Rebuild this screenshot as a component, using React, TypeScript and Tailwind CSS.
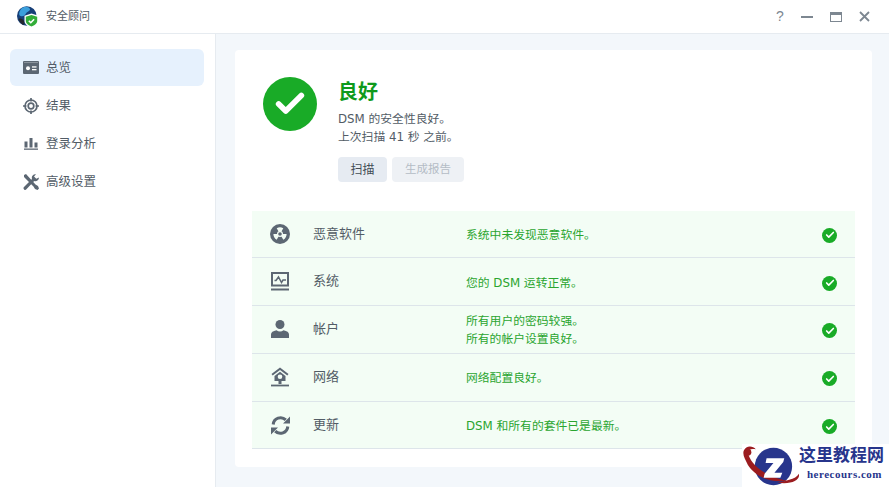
import React from 'react';
import { Check } from 'lucide-react';

const FONT = 'font-["DejaVu_Sans","Noto_Sans_CJK_SC",sans-serif]';

const AppLogo = () => (
  <svg width="22" height="22" viewBox="0 0 22 22">
    <circle cx="9.800" cy="10" r="9.800" fill="#173f78" />
    <path d="M4.500 2.500c3-2.500 7-2 8.500 .5 .5 2-3 2.500-4 4.500s-3 3.500-5.500 2.500-1-5.500 1-7.500z" fill="#3b9fdc" />
    <path d="M1.500 13c2-1 4.500 0 5.500 2s0 4.500-1.500 3.500-3.500-3.500-4-5.500z" fill="#23272f" />
    <path d="M14.500 7.500l7 2.300v5.200c0 3.300-3.500 5.800-7 7-3.500-1.200-7-3.700-7-7V9.800z" fill="#fff" />
    <path d="M14.500 9l5.700 1.800v4.200c0 2.600-2.800 4.500-5.700 5.500-2.900-1-5.700-2.900-5.700-5.500v-4.200z" fill="#32ad38" />
    <path d="M11.800 14.700l2 2 3.300-3.500" fill="none" stroke="#fff" strokeWidth="1.600" />
  </svg>
);

const OverviewIcon = () => (
  <svg width="16" height="13" viewBox="0 0 16 13">
    <rect width="16" height="13" rx="1" fill="#5c6773" />
    <rect x="1" y="1" width="14" height="1" fill="#8b949d" />
    <circle cx="5" cy="7.200" r="2" fill="#fff" />
    <rect x="9" y="5.300" width="4.500" height="1.300" fill="#fff" />
    <rect x="9" y="8" width="4.500" height="1.300" fill="#fff" />
  </svg>
);

const ResultIcon = () => (
  <svg width="16" height="16" viewBox="0 0 16 16" fill="none" stroke="#5c6773">
    <circle cx="8" cy="8" r="6" strokeWidth="1.700" />
    <circle cx="8" cy="8" r="2.800" strokeWidth="1.700" />
    <path d="M8 0v3.500M8 12.500V16M0 8h3.500M12.500 8H16" strokeWidth="1.700" />
  </svg>
);

const ChartIcon = () => (
  <svg width="14" height="13" viewBox="0 0 14 13" fill="#5c6773">
    <rect x="0.500" y="4.500" width="3" height="6" />
    <rect x="5.500" y="1" width="3" height="9.500" />
    <rect x="10.500" y="5.500" width="3" height="5" />
    <rect x="0" y="11.500" width="14" height="1.300" />
  </svg>
);

const ToolsIcon = () => (
  <svg width="16" height="16" viewBox="0 0 16 16" fill="#5c6773">
    <path d="M1 1l2-1 9.500 10.500 2.500 1.500 1 2.500-1.500 1.500-2.500-1-1.500-2.500L1 3z" />
    <path d="M16 3.500a3.600 3.600 0 0 1-4.800 3.400L3.400 15.300a1.300 1.300 0 0 1-2.400-2.200l8-8.200A3.600 3.600 0 0 1 13 .2l-2 2.300 2.300 2.200z" />
  </svg>
);

const MalwareIcon = () => (
  <svg width="20" height="20" viewBox="0 0 20 20">
    <circle cx="10" cy="10" r="10" fill="#5c6773" />
    <path d="M10 10L6.700 4.300a6.600 6.600 0 0 1 6.600 0zM10 10h6.600a6.600 6.600 0 0 1-3.300 5.700zM10 10l-3.300 5.700A6.600 6.600 0 0 1 3.400 10z" fill="#f3fdf5" />
    <circle cx="10" cy="10" r="3" fill="#f3fdf5" />
    <circle cx="10" cy="10" r="1.800" fill="#5c6773" />
  </svg>
);

const SystemIcon = () => (
  <svg width="18" height="19" viewBox="0 0 18 19" fill="none" stroke="#5c6773">
    <rect x="1" y="1" width="16" height="12.500" strokeWidth="2" />
    <path d="M3.500 8.500h1.500l2.500-3.500 3 5.500 1.500-2.500h3" strokeWidth="1.500" />
    <path d="M0 17.500h18" strokeWidth="2" />
  </svg>
);

const UserIcon = () => (
  <svg width="18" height="18" viewBox="0 0 18 18" fill="#5c6773">
    <circle cx="9" cy="4.500" r="4.500" />
    <path d="M0 18v-3.500c0-2 2-3.500 5.500-4.200 1 .8 2.200 1.200 3.500 1.200s2.500-.4 3.500-1.200c3.500.7 5.500 2.200 5.500 4.200V18z" />
  </svg>
);

const NetworkIcon = () => (
  <svg width="18" height="20" viewBox="0 0 18 20" fill="none">
    <path d="M9 .5L17.500 7l-1.200 1.500L9 3 1.700 8.500.5 7z" fill="#5c6773" />
    <path d="M3.500 9L9 4.800 14.500 9v5h-11z" fill="#5c6773" />
    <circle cx="9" cy="9.800" r="2.300" fill="#f3fdf5" />
    <rect x="7.500" y="14" width="3" height="3" fill="#5c6773" />
    <path d="M0 18.500h18" stroke="#5c6773" strokeWidth="1.800" />
  </svg>
);

const RefreshIcon = () => (
  <svg width="19" height="19" viewBox="0 0 19 19" fill="none">
    <path d="M2.200 8.500a7.400 7.400 0 0 1 12.600-4.600" stroke="#5c6773" strokeWidth="3" />
    <path d="M16.800 10.500a7.400 7.400 0 0 1-12.600 4.600" stroke="#5c6773" strokeWidth="3" />
    <path d="M12 7.500h7v-7zM7 11.500H0v7z" fill="#5c6773" />
  </svg>
);

const Watermark = () => (
  <div className="absolute right-0 bottom-0 flex h-[43px] w-[147px] bg-white">
    <svg width="57" height="43" viewBox="0 0 58 43" className="shrink-0">
      <circle cx="32" cy="22.500" r="19" fill="#27358c" />
      <path d="M2 6c2-5 9-5 12-1-4-1-8 0-8 3 2 12 17 25 40 29-18 3-33-5-40-16C3 15 0 10 2 6z" fill="#9b1c1f" />
      <path d="M48 36c5-1 8-3 10-6 1 6-6 11-22 9 5-1 9-2 12-3z" fill="#9b1c1f" />
      <circle cx="6" cy="8" r="3.500" fill="#9b1c1f" />
      <path d="M25 14h18l-1 4-9 11h8l-2 5H22l1-4 9-11h-8z" fill="#fff" />
    </svg>
    <div className="flex min-w-0 flex-1 flex-col">
      <div className={`whitespace-nowrap text-[17px] leading-[22px] font-bold text-[#27358c] ${FONT}`}>这里教程网</div>
      <div className="mt-[1px] ml-[8px] whitespace-nowrap font-['Liberation_Serif',serif] text-[11px] leading-[14px] font-bold tracking-[0.5px] text-[#27358c]">herecours.com</div>
    </div>
  </div>
);

const navItems = [
  { label: '总览', icon: OverviewIcon, active: true },
  { label: '结果', icon: ResultIcon },
  { label: '登录分析', icon: ChartIcon },
  { label: '高级设置', icon: ToolsIcon },
];

const rows = [
  { label: '恶意软件', icon: MalwareIcon, lines: ['系统中未发现恶意软件。'] },
  { label: '系统', icon: SystemIcon, lines: ['您的 DSM 运转正常。'] },
  { label: '帐户', icon: UserIcon, lines: ['所有用户的密码较强。', '所有的帐户设置良好。'] },
  { label: '网络', icon: NetworkIcon, lines: ['网络配置良好。'] },
  { label: '更新', icon: RefreshIcon, lines: ['DSM 和所有的套件已是最新。'] },
];

const App: React.FC = () => {
  return (
    <div className={`relative flex h-[487px] w-[889px] flex-col overflow-hidden bg-white ${FONT}`}>
      {/* Title bar */}
      <header className="flex h-[34px] shrink-0 items-center border-b border-[#e6ebf0] pl-[17px] pr-[19px]">
        <AppLogo />
        <span className="ml-[7px] mt-[2px] text-[11px] text-[#525c66]">安全顾问</span>
        <div className="ml-auto flex items-center gap-[17px] text-[#7d8791]">
          <span className="w-[8px] text-center text-[14px] font-['Liberation_Sans',sans-serif]">?</span>
          <span className="h-[2px] w-[12px] bg-[#7d8791]" />
          <span className="h-[10px] w-[12px] border border-[#7d8791] border-t-[3px]" />
          <svg width="11" height="11" viewBox="0 0 11 11" stroke="#7d8791" strokeWidth="1.800">
            <path d="M1 1l9 9M10 1l-9 9" />
          </svg>
        </div>
      </header>

      <div className="flex min-h-0 flex-1">
        {/* Sidebar */}
        <aside className="w-[216px] shrink-0 border-r border-[#e6ebf0] pl-[10px] pr-[11px] pt-[15px]">
          {navItems.map((item) => (
            <div
              key={item.label}
              className={`mb-[1px] flex h-[37px] items-center rounded-[6px] pl-[13px] ${item.active ? 'bg-[#e6f1fd]' : ''}`}
            >
              <span className="flex w-[16px] justify-center">
                <item.icon />
              </span>
              <span className="ml-[7px] mt-[2px] text-[12.5px] text-[#525c66]">{item.label}</span>
            </div>
          ))}
        </aside>

        {/* Main */}
        <main className="flex-1 bg-[#f3f7fb] pl-[19px] pr-[17px] pt-[16px] pb-[20px]">
          <div className="h-full rounded-[4px] bg-white px-[17px] pt-[27px]">
            <div className="flex pl-[11px]">
              <div className="flex h-[54px] w-[54px] items-center justify-center rounded-full bg-[#19ab27]">
                <Check size={34} color="#ffffff" strokeWidth={4} />
              </div>
              <div className="ml-[21px]">
                <div className="text-[20px] leading-[30px] font-bold text-[#0e9a1c]">良好</div>
                <div className="mt-[3px] text-[11.8px] leading-[18px] text-[#525c66]">DSM 的安全性良好。</div>
                <div className="text-[11.8px] leading-[18px] text-[#525c66]">上次扫描 41 秒 之前。</div>
                <div className="mt-[11px] flex gap-[5px]">
                  <button className="h-[25px] w-[49px] rounded-[4px] bg-[#e6ebf2] text-[12px] text-[#414b55]">扫描</button>
                  <button className="h-[25px] w-[72px] rounded-[4px] bg-[#eef1f5] text-[11.5px] text-[#b4bcc5]">生成报告</button>
                </div>
              </div>
            </div>

            <div className="mt-[28.5px]">
              {rows.map((row) => (
                <div key={row.label} className="flex h-[47.8px] items-center border-b border-[#dde5ea] bg-[#f3fdf5]">
                  <span className="ml-[18px] flex w-[20px] justify-center">
                    <row.icon />
                  </span>
                  <span className="ml-[23px] mb-[1px] w-[153px] text-[13px] text-[#525c66]">{row.label}</span>
                  <div className="mt-[2px] flex-1 text-[11.8px] leading-[18px] text-[#2aa52f]">
                    {row.lines.map((line) => (
                      <div key={line}>{line}</div>
                    ))}
                  </div>
                  <span className="mr-[18px] mt-[3px] flex h-[15px] w-[15px] items-center justify-center rounded-full bg-[#19ab27]">
                    <Check size={10} color="#ffffff" strokeWidth={4} />
                  </span>
                </div>
              ))}
            </div>
          </div>
        </main>
      </div>

      <Watermark />
    </div>
  );
};

export default App;
